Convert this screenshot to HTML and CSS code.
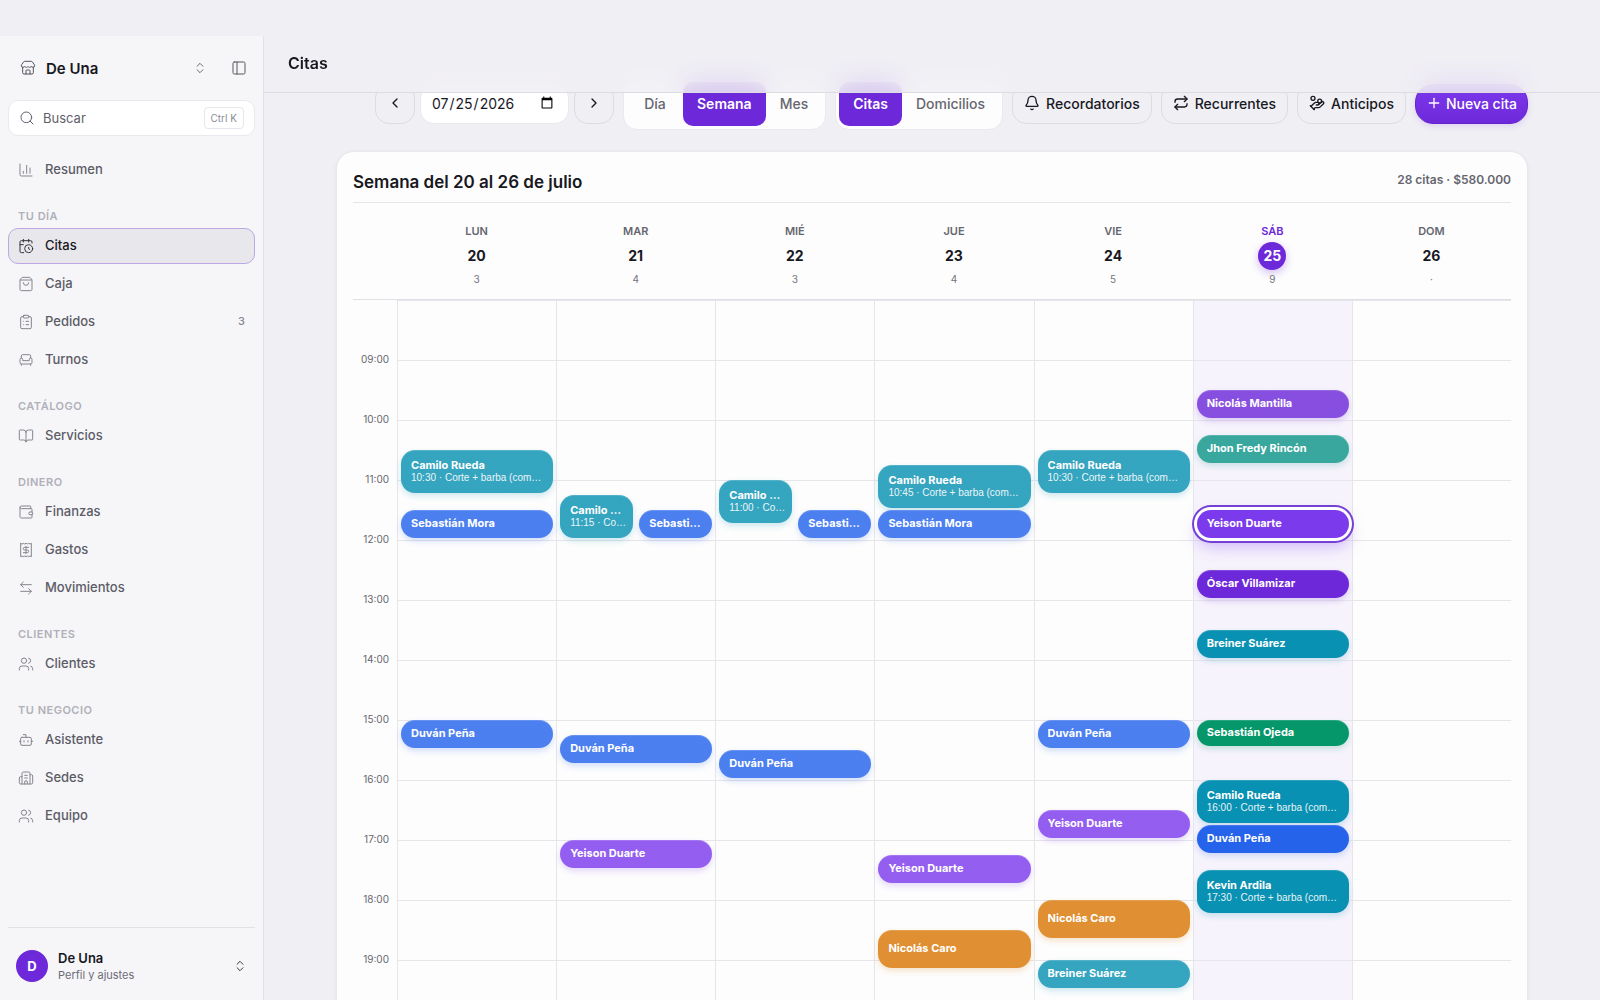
FILE: index.html
```html
<!DOCTYPE html>
<html lang="es">
<head>
    <meta charset="UTF-8">
    <meta name="viewport" content="width=device-width, initial-scale=1.0">
    <title>Citas - De Una</title>
    <link rel="stylesheet" href="styles.css">
</head>
<body>

    <div class="app">
        <aside class="sidebar">
            <div class="brand">
                <button class="brand-switch">
                    <svg class="icon" viewBox="0 0 24 24"><path d="M15 21v-5a1 1 0 0 0-1-1h-4a1 1 0 0 0-1 1v5"/><path d="M17.774 10.31a1.12 1.12 0 0 0-1.549 0 2.5 2.5 0 0 1-3.451 0 1.12 1.12 0 0 0-1.548 0 2.5 2.5 0 0 1-3.452 0 1.12 1.12 0 0 0-1.549 0 2.5 2.5 0 0 1-3.77-3.248l2.889-4.184A2 2 0 0 1 7 2h10a2 2 0 0 1 1.653.873l2.895 4.192a2.5 2.5 0 0 1-3.774 3.244"/><path d="M4 10.95V19a2 2 0 0 0 2 2h12a2 2 0 0 0 2-2v-8.05"/></svg>
                    <span class="brand-name">De Una</span>
                    <svg class="icon icon-small" viewBox="0 0 24 24"><path d="m7 15 5 5 5-5"/><path d="m7 9 5-5 5 5"/></svg>
                </button>
                <button class="icon-button" aria-label="Contraer menú">
                    <svg class="icon" viewBox="0 0 24 24"><rect x="3" y="3" width="18" height="18" rx="2"/><path d="M9 3v18"/></svg>
                </button>
            </div>

            <button class="search">
                <svg class="icon" viewBox="0 0 24 24"><circle cx="11" cy="11" r="8"/><path d="m21 21-4.3-4.3"/></svg>
                <span>Buscar</span>
                <kbd>Ctrl K</kbd>
            </button>

            <nav class="nav">
                <a class="nav-item" href="#">
                    <svg class="icon" viewBox="0 0 24 24"><path d="M3 3v16a2 2 0 0 0 2 2h16"/><path d="M18 17V9"/><path d="M13 17V5"/><path d="M8 17v-3"/></svg>
                    <span>Resumen</span>
                </a>

                <h2 class="nav-title">Tu día</h2>
                <a class="nav-item active" href="#">
                    <svg class="icon" viewBox="0 0 24 24"><path d="M16 14v2.2l1.6 1"/><path d="M16 2v4"/><path d="M21 7.5V6a2 2 0 0 0-2-2H5a2 2 0 0 0-2 2v14a2 2 0 0 0 2 2h3.500"/><path d="M3 10h5"/><path d="M8 2v4"/><circle cx="16" cy="16" r="6"/></svg>
                    <span>Citas</span>
                </a>
                <a class="nav-item" href="#">
                    <svg class="icon" viewBox="0 0 24 24"><path d="M16 10a4 4 0 0 1-8 0"/><path d="M3.103 6.034h17.794"/><path d="M3.400 5.467a2 2 0 0 0-.4 1.200V20a2 2 0 0 0 2 2h14a2 2 0 0 0 2-2V6.667a2 2 0 0 0-.4-1.200l-2-2.667A2 2 0 0 0 17 2H7a2 2 0 0 0-1.600.800z"/></svg>
                    <span>Caja</span>
                </a>
                <a class="nav-item" href="#">
                    <svg class="icon" viewBox="0 0 24 24"><rect x="8" y="2" width="8" height="4" rx="1"/><path d="M16 4h2a2 2 0 0 1 2 2v14a2 2 0 0 1-2 2H6a2 2 0 0 1-2-2V6a2 2 0 0 1 2-2h2"/><path d="M12 11h4"/><path d="M12 16h4"/><path d="M8 11h.01"/><path d="M8 16h.01"/></svg>
                    <span>Pedidos</span>
                    <span class="nav-count">3</span>
                </a>
                <a class="nav-item" href="#">
                    <svg class="icon" viewBox="0 0 24 24"><path d="M19 9V6a2 2 0 0 0-2-2H7a2 2 0 0 0-2 2v3"/><path d="M3 16a2 2 0 0 0 2 2h14a2 2 0 0 0 2-2v-5a2 2 0 0 0-4 0v1.500a.5.5 0 0 1-.5.5h-9a.5.5 0 0 1-.5-.5V11a2 2 0 0 0-4 0z"/><path d="M5 18v2"/><path d="M19 18v2"/></svg>
                    <span>Turnos</span>
                </a>

                <h2 class="nav-title">Catálogo</h2>
                <a class="nav-item" href="#">
                    <svg class="icon" viewBox="0 0 24 24"><path d="M12 7v14"/><path d="M3 18a1 1 0 0 1-1-1V4a1 1 0 0 1 1-1h5a4 4 0 0 1 4 4 4 4 0 0 1 4-4h5a1 1 0 0 1 1 1v13a1 1 0 0 1-1 1h-6a3 3 0 0 0-3 3 3 3 0 0 0-3-3z"/></svg>
                    <span>Servicios</span>
                </a>

                <h2 class="nav-title">Dinero</h2>
                <a class="nav-item" href="#">
                    <svg class="icon" viewBox="0 0 24 24"><path d="M19 7V4a1 1 0 0 0-1-1H5a2 2 0 0 0 0 4h15a1 1 0 0 1 1 1v4h-3a2 2 0 0 0 0 4h3a1 1 0 0 0 1-1v-2a1 1 0 0 0-1-1"/><path d="M3 5v14a2 2 0 0 0 2 2h15a1 1 0 0 0 1-1v-4"/></svg>
                    <span>Finanzas</span>
                </a>
                <a class="nav-item" href="#">
                    <svg class="icon" viewBox="0 0 24 24"><path d="M4 2v20l2-1 2 1 2-1 2 1 2-1 2 1 2-1 2 1V2l-2 1-2-1-2 1-2-1-2 1-2-1-2 1Z"/><path d="M16 8h-6a2 2 0 1 0 0 4h4a2 2 0 1 1 0 4H8"/><path d="M12 17.500v-11"/></svg>
                    <span>Gastos</span>
                </a>
                <a class="nav-item" href="#">
                    <svg class="icon" viewBox="0 0 24 24"><path d="M8 3 4 7l4 4"/><path d="M4 7h16"/><path d="m16 21 4-4-4-4"/><path d="M20 17H4"/></svg>
                    <span>Movimientos</span>
                </a>

                <h2 class="nav-title">Clientes</h2>
                <a class="nav-item" href="#">
                    <svg class="icon" viewBox="0 0 24 24"><path d="M16 21v-2a4 4 0 0 0-4-4H6a4 4 0 0 0-4 4v2"/><circle cx="9" cy="7" r="4"/><path d="M22 21v-2a4 4 0 0 0-3-3.870"/><path d="M16 3.130a4 4 0 0 1 0 7.750"/></svg>
                    <span>Clientes</span>
                </a>

                <h2 class="nav-title">Tu negocio</h2>
                <a class="nav-item" href="#">
                    <svg class="icon" viewBox="0 0 24 24"><path d="M12 8V4H8"/><rect x="4" y="8" width="16" height="12" rx="2"/><path d="M2 14h2"/><path d="M20 14h2"/><path d="M15 13v2"/><path d="M9 13v2"/></svg>
                    <span>Asistente</span>
                </a>
                <a class="nav-item" href="#">
                    <svg class="icon" viewBox="0 0 24 24"><path d="M10 12h4"/><path d="M10 8h4"/><path d="M14 21v-3a2 2 0 0 0-4 0v3"/><path d="M6 10H4a2 2 0 0 0-2 2v7a2 2 0 0 0 2 2h16a2 2 0 0 0 2-2V9a2 2 0 0 0-2-2h-2"/><path d="M6 21V5a2 2 0 0 1 2-2h8a2 2 0 0 1 2 2v16"/></svg>
                    <span>Sedes</span>
                </a>
                <a class="nav-item" href="#">
                    <svg class="icon" viewBox="0 0 24 24"><path d="M16 21v-2a4 4 0 0 0-4-4H6a4 4 0 0 0-4 4v2"/><circle cx="9" cy="7" r="4"/><path d="M22 21v-2a4 4 0 0 0-3-3.870"/><path d="M16 3.130a4 4 0 0 1 0 7.750"/></svg>
                    <span>Equipo</span>
                </a>
            </nav>

            <div class="sidebar-footer">
                <button class="profile">
                    <span class="avatar">D</span>
                    <span class="profile-text">
                        <span class="profile-name">De Una</span>
                        <span class="profile-sub">Perfil y ajustes</span>
                    </span>
                    <svg class="icon icon-small" viewBox="0 0 24 24"><path d="m7 15 5 5 5-5"/><path d="m7 9 5-5 5 5"/></svg>
                </button>
            </div>
        </aside>

        <main class="main">
            <header class="topbar">
                <h1>Citas</h1>
            </header>

            <div class="content">
                <div class="toolbar">
                    <div class="date-nav">
                        <button class="button square" aria-label="Semana anterior">
                            <svg class="icon" viewBox="0 0 24 24"><path d="m15 18-6-6 6-6"/></svg>
                        </button>
                        <input class="date" type="date" value="2026-07-25" aria-label="Fecha">
                        <button class="button square" aria-label="Semana siguiente">
                            <svg class="icon" viewBox="0 0 24 24"><path d="m9 18 6-6-6-6"/></svg>
                        </button>
                    </div>
                    <div class="segmented">
                        <button class="segment">Día</button>
                        <button class="segment active">Semana</button>
                        <button class="segment">Mes</button>
                    </div>
                    <div class="segmented">
                        <button class="segment active">Citas</button>
                        <button class="segment">Domicilios</button>
                    </div>
                    <button class="button">
                        <svg class="icon" viewBox="0 0 24 24"><path d="M10.268 21a2 2 0 0 0 3.464 0"/><path d="M3.262 15.326A1 1 0 0 0 4 17h16a1 1 0 0 0 .740-1.673C19.410 13.956 18 12.499 18 8A6 6 0 0 0 6 8c0 4.499-1.411 5.956-2.738 7.326"/></svg>
                        Recordatorios
                    </button>
                    <button class="button">
                        <svg class="icon" viewBox="0 0 24 24"><path d="m17 2 4 4-4 4"/><path d="M3 11v-1a4 4 0 0 1 4-4h14"/><path d="m7 22-4-4 4-4"/><path d="M21 13v1a4 4 0 0 1-4 4H3"/></svg>
                        Recurrentes
                    </button>
                    <button class="button">
                        <svg class="icon" viewBox="0 0 24 24"><path d="M11 15h2a2 2 0 1 0 0-4h-3c-.6 0-1.100.2-1.400.6L3 17"/><path d="m7 21 1.600-1.400c.3-.4.8-.6 1.400-.6h4c1.100 0 2.100-.4 2.800-1.200l4.600-4.400a2 2 0 0 0-2.750-2.910l-4.200 3.900"/><path d="m2 16 6 6"/><circle cx="16" cy="9" r="2.900"/><circle cx="6" cy="5" r="3"/></svg>
                        Anticipos
                    </button>
                    <button class="button primary">
                        <svg class="icon" viewBox="0 0 24 24"><path d="M5 12h14"/><path d="M12 5v14"/></svg>
                        Nueva cita
                    </button>
                </div>

                <section class="card">
                    <div class="card-header">
                        <h2>Semana del 20 al 26 de julio</h2>
                        <span class="card-total">28 citas · $580.000</span>
                    </div>

                    <div class="week days">
                        <div class="day first"><span class="day-name">Lun</span><span class="day-number">20</span><span class="day-count">3</span></div>
                        <div class="day"><span class="day-name">Mar</span><span class="day-number">21</span><span class="day-count">4</span></div>
                        <div class="day"><span class="day-name">Mié</span><span class="day-number">22</span><span class="day-count">3</span></div>
                        <div class="day"><span class="day-name">Jue</span><span class="day-number">23</span><span class="day-count">4</span></div>
                        <div class="day"><span class="day-name">Vie</span><span class="day-number">24</span><span class="day-count">5</span></div>
                        <div class="day today"><span class="day-name">Sáb</span><span class="day-number">25</span><span class="day-count">9</span></div>
                        <div class="day"><span class="day-name">Dom</span><span class="day-number">26</span><span class="day-count">·</span></div>
                    </div>

                    <!-- one grid row = 5 minutes, row 1 = 08:00 -->
                    <div class="week">
                        <div class="hours">
                            <span>09:00</span>
                            <span>10:00</span>
                            <span>11:00</span>
                            <span>12:00</span>
                            <span>13:00</span>
                            <span>14:00</span>
                            <span>15:00</span>
                            <span>16:00</span>
                            <span>17:00</span>
                            <span>18:00</span>
                            <span>19:00</span>
                        </div>
                        <div class="column">
                            <button class="event teal past" style="grid-row: 31 / span 9"><b>Camilo Rueda</b><small>10:30 · Corte + barba (combo)</small></button>
                            <button class="event blue past" style="grid-row: 43 / span 6"><b>Sebastián Mora</b></button>
                            <button class="event blue past" style="grid-row: 85 / span 6"><b>Duván Peña</b></button>
                        </div>
                        <div class="column">
                            <button class="event teal past left" style="grid-row: 40 / span 9"><b>Camilo Rueda</b><small>11:15 · Corte + barba (combo)</small></button>
                            <button class="event blue past right" style="grid-row: 43 / span 6"><b>Sebastián Mora</b></button>
                            <button class="event blue past" style="grid-row: 88 / span 6"><b>Duván Peña</b></button>
                            <button class="event violet past" style="grid-row: 109 / span 6"><b>Yeison Duarte</b></button>
                        </div>
                        <div class="column">
                            <button class="event teal past left" style="grid-row: 37 / span 9"><b>Camilo Rueda</b><small>11:00 · Corte + barba (combo)</small></button>
                            <button class="event blue past right" style="grid-row: 43 / span 6"><b>Sebastián Mora</b></button>
                            <button class="event blue past" style="grid-row: 91 / span 6"><b>Duván Peña</b></button>
                        </div>
                        <div class="column">
                            <button class="event teal past" style="grid-row: 34 / span 9"><b>Camilo Rueda</b><small>10:45 · Corte + barba (combo)</small></button>
                            <button class="event blue past" style="grid-row: 43 / span 6"><b>Sebastián Mora</b></button>
                            <button class="event violet past" style="grid-row: 112 / span 6"><b>Yeison Duarte</b></button>
                            <button class="event orange past" style="grid-row: 127 / span 8"><b>Nicolás Caro</b></button>
                        </div>
                        <div class="column">
                            <button class="event teal past" style="grid-row: 31 / span 9"><b>Camilo Rueda</b><small>10:30 · Corte + barba (combo)</small></button>
                            <button class="event blue past" style="grid-row: 85 / span 6"><b>Duván Peña</b></button>
                            <button class="event violet past" style="grid-row: 103 / span 6"><b>Yeison Duarte</b></button>
                            <button class="event orange past" style="grid-row: 121 / span 8"><b>Nicolás Caro</b></button>
                            <button class="event teal past" style="grid-row: 133 / span 6"><b>Breiner Suárez</b></button>
                        </div>
                        <div class="column today">
                            <button class="event purple past" style="grid-row: 19 / span 6"><b>Nicolás Mantilla</b></button>
                            <button class="event jade past" style="grid-row: 28 / span 6"><b>Jhon Fredy Rincón</b></button>
                            <button class="event violet current" style="grid-row: 43 / span 6"><b>Yeison Duarte</b></button>
                            <button class="event purple" style="grid-row: 55 / span 6"><b>Óscar Villamizar</b></button>
                            <button class="event teal" style="grid-row: 67 / span 6"><b>Breiner Suárez</b></button>
                            <button class="event green" style="grid-row: 85 / span 5"><b>Sebastián Ojeda</b></button>
                            <button class="event teal" style="grid-row: 97 / span 9"><b>Camilo Rueda</b><small>16:00 · Corte + barba (combo)</small></button>
                            <button class="event blue" style="grid-row: 106 / span 6"><b>Duván Peña</b></button>
                            <button class="event teal" style="grid-row: 115 / span 9"><b>Kevin Ardila</b><small>17:30 · Corte + barba (combo)</small></button>
                        </div>
                        <div class="column"></div>
                    </div>
                </section>
            </div>
        </main>
    </div>

</body>
</html>
```
FILE: styles.css
```css
* {
    box-sizing: border-box;
}
body {
    margin: 0;
    font-family: Inter, "Liberation Sans", sans-serif;
    font-size: 13px;
    color: #18181f;
    background-color: #f0eff4;
}
button,
input {
    font: inherit;
    color: inherit;
}
button {
    cursor: pointer;
}
h1,
h2 {
    margin: 0;
}
.app {
    display: flex;
    height: 100vh;
    padding-top: 36px;
    overflow: hidden;
}
.icon {
    width: 16px;
    height: 16px;
    flex-shrink: 0;
    fill: none;
    stroke: currentColor;
    stroke-width: 1.5;
    stroke-linecap: round;
    stroke-linejoin: round;
}
.icon-small {
    width: 14px;
    height: 14px;
}

/* sidebar */
.sidebar {
    display: flex;
    flex-direction: column;
    width: 264px;
    flex-shrink: 0;
    padding: 12px 8px 0;
    background-color: #f6f6f9;
    border-right: 1px solid #e2e1e7;
}
.brand {
    display: flex;
    align-items: center;
    height: 40px;
    margin-bottom: 12px;
}
.brand-switch {
    display: flex;
    align-items: center;
    flex: 1;
    gap: 10px;
    padding: 0 16px 0 12px;
    border: none;
    background: none;
}
.brand-name {
    flex: 1;
    text-align: left;
    font-size: 15px;
    font-weight: 600;
}
.brand .icon {
    color: #55555f;
}
.icon-button {
    display: flex;
    padding: 8px;
    border: none;
    background: none;
}
.search {
    display: flex;
    align-items: center;
    gap: 8px;
    height: 36px;
    padding: 0 10px;
    border: 1px solid #e9e9ee;
    border-radius: 10px;
    background-color: #fff;
    color: #5f5f6a;
    text-align: left;
}
.search span {
    flex: 1;
}
.search kbd {
    padding: 2px 6px;
    border: 1px solid #e6e6eb;
    border-radius: 4px;
    font-family: inherit;
    font-size: 10px;
    line-height: 16px;
    color: #8b8b95;
}
.nav {
    display: flex;
    flex-direction: column;
    gap: 2px;
    flex: 1;
    padding-top: 16px;
}
.nav-title {
    margin: 18px 0 2px;
    padding: 0 10px;
    font-size: 11px;
    line-height: 16px;
    font-weight: 600;
    letter-spacing: 0.5px;
    text-transform: uppercase;
    color: #b0b0b8;
}
.nav-item {
    display: flex;
    align-items: center;
    gap: 11px;
    height: 36px;
    padding: 0 9px;
    border: 1px solid transparent;
    border-radius: 10px;
    font-weight: 500;
    text-decoration: none;
    color: #5c5c66;
}
.nav-item span {
    padding-bottom: 2px;
}
.nav-item .icon {
    color: #85858d;
}
.nav-item.active {
    background-color: #e8e7ec;
    border-color: #bba8e4;
    color: #18181f;
}
.nav-item.active .icon {
    color: #33333b;
}
.nav-count {
    margin-left: auto;
    font-size: 11px;
    color: #85858d;
}
.sidebar-footer {
    padding: 14px 0 10px;
    border-top: 1px solid #e2e1e7;
}
.profile {
    display: flex;
    align-items: center;
    gap: 10px;
    width: 100%;
    height: 48px;
    padding: 0 8px;
    border: none;
    background: none;
    text-align: left;
}
.avatar {
    display: flex;
    align-items: center;
    justify-content: center;
    width: 32px;
    height: 32px;
    border-radius: 50%;
    background-color: #6d28d9;
    color: #fff;
    font-weight: 700;
}
.profile-text {
    display: flex;
    flex-direction: column;
    flex: 1;
}
.profile-name {
    font-weight: 600;
    line-height: 18px;
}
.profile-sub {
    font-size: 11px;
    line-height: 16px;
    color: #6b6b75;
}

/* main */
.main {
    flex: 1;
    min-width: 0;
}
.topbar {
    position: sticky;
    top: 0;
    z-index: 2;
    display: flex;
    align-items: center;
    height: 57px;
    padding: 0 24px 2px;
    border-bottom: 1px solid #dddce2;
    background-color: rgba(240, 239, 244, 0.8);
    backdrop-filter: blur(12px);
}
.topbar h1 {
    font-size: 16px;
    font-weight: 600;
}
.content {
    max-width: 1240px;
    margin: -15px auto 0;
    padding: 0 24px;
}
.toolbar {
    display: flex;
    align-items: center;
    justify-content: flex-end;
    gap: 9px;
    margin-bottom: 21px;
}
.date-nav {
    display: flex;
    align-items: center;
    gap: 5px;
}
.button {
    display: flex;
    align-items: center;
    gap: 6px;
    height: 40px;
    padding: 0 11px 2px;
    border: 1px solid #dddce2;
    border-radius: 14px;
    background-color: #f0eff4;
    font-size: 14px;
    font-weight: 500;
    white-space: nowrap;
}
.button .icon {
    stroke-width: 2;
}
.button.square {
    width: 40px;
}
.button.primary {
    gap: 4px;
    padding: 0 10px 2px;
    border-color: #6524cc;
    border-radius: 18px;
    background: linear-gradient(#7c3aed, #6d28d9);
    color: #fff;
    box-shadow: 0 2px 6px rgba(109, 40, 217, 0.15);
}
.date {
    width: 149px;
    height: 40px;
    padding: 0 12px 2px 10px;
    border: 1px solid #e9e9ee;
    border-radius: 14px;
    background-color: #fff;
    font-size: 14px;
}
.segmented {
    display: flex;
    height: 52px;
    padding: 3px;
    border: 1px solid #e9e9ee;
    border-radius: 14px;
    background-color: #fdfdfe;
}
.segment {
    min-width: 56px;
    padding: 0 14px 2px;
    border: none;
    border-radius: 10px;
    background: none;
    font-size: 14px;
    font-weight: 500;
    color: #66666f;
}
.segment.active {
    background-color: #6d28d9;
    color: #fff;
    font-weight: 600;
}
.card {
    padding: 16px;
    border: 1px solid #e9e8ee;
    border-radius: 18px;
    background-color: #fdfdfd;
    box-shadow: 0 1px 4px rgba(24, 24, 31, 0.06);
}
.card-header {
    display: flex;
    justify-content: space-between;
    height: 35px;
    border-bottom: 1px solid #e6e5ea;
}
.card-header h2 {
    font-size: 17px;
    line-height: 28px;
    font-weight: 600;
}
.card-total {
    font-size: 12px;
    font-weight: 600;
    line-height: 24px;
    color: #66666f;
}

/* week */
.week {
    display: grid;
    grid-template-columns: 44px repeat(7, 1fr);
}
.days {
    padding: 20px 0 12px;
    border-bottom: 1px solid #e0dfe5;
}
.day {
    display: flex;
    flex-direction: column;
    align-items: center;
}
.day.first {
    grid-column: 2;
}
.day-name {
    font-size: 11px;
    line-height: 16px;
    font-weight: 600;
    text-transform: uppercase;
    color: #66666f;
}
.day-number {
    width: 28px;
    height: 28px;
    margin: 3px 0 1px;
    border-radius: 50%;
    font-size: 14px;
    line-height: 28px;
    font-weight: 700;
    text-align: center;
}
.day-count {
    font-size: 10px;
    line-height: 16px;
    color: #74747e;
}
.day.today .day-name {
    color: #6d28d9;
}
.day.today .day-number {
    background-color: #6d28d9;
    color: #fff;
    box-shadow: 0 3px 8px rgba(109, 40, 217, 0.3);
}
.hours {
    display: flex;
    flex-direction: column;
    padding-top: 52px;
    padding-right: 8px;
}
.hours span {
    height: 60px;
    font-size: 10px;
    line-height: 14px;
    text-align: right;
    color: #66666f;
}
.column {
    display: grid;
    grid-template-columns: 1fr 1fr;
    grid-template-rows: repeat(156, 5px);
    border-left: 1px solid #e6e5ea;
    background-image: linear-gradient(#e6e5ea 1px, transparent 1px);
    background-size: 100% 60px;
}
.column.today {
    background-color: #f6f3fc;
}
.event {
    grid-column: 1 / 3;
    display: flex;
    flex-direction: column;
    justify-content: center;
    min-width: 0;
    min-height: 26px;
    margin: 0 3px 2px;
    padding: 0 9px 1px 10px;
    border: none;
    border-radius: 14px;
    color: #fff;
    text-align: left;
}
.event b,
.event small {
    overflow: hidden;
    text-overflow: ellipsis;
    white-space: nowrap;
}
.event b {
    font-size: 11px;
    line-height: 13px;
    font-weight: 700;
}
.event small {
    font-family: "Liberation Sans", Arial, sans-serif;
    font-size: 10px;
    line-height: 12px;
    opacity: 0.9;
}
.event.left {
    grid-column: 1;
    padding-right: 6px;
}
.event.right {
    grid-column: 2;
}
.event.past {
    background-image: linear-gradient(rgba(255, 255, 255, 0.18), rgba(255, 255, 255, 0.18));
}
.teal {
    background-color: #0891b2;
    box-shadow: 0 3px 6px rgba(8, 145, 178, 0.2), inset 0 1px 0 rgba(255, 255, 255, 0.15);
}
.blue {
    background-color: #2563eb;
    box-shadow: 0 3px 6px rgba(37, 99, 235, 0.2), inset 0 1px 0 rgba(255, 255, 255, 0.15);
}
.violet {
    background-color: #7c3aed;
    box-shadow: 0 3px 6px rgba(124, 58, 237, 0.2), inset 0 1px 0 rgba(255, 255, 255, 0.15);
}
.purple {
    background-color: #6d28d9;
    box-shadow: 0 3px 6px rgba(109, 40, 217, 0.2), inset 0 1px 0 rgba(255, 255, 255, 0.15);
}
.jade {
    background-color: #0d9488;
    box-shadow: 0 3px 6px rgba(13, 148, 136, 0.2), inset 0 1px 0 rgba(255, 255, 255, 0.15);
}
.green {
    background-color: #059669;
    box-shadow: 0 3px 6px rgba(5, 150, 105, 0.2), inset 0 1px 0 rgba(255, 255, 255, 0.15);
}
.orange {
    background-color: #d97706;
    box-shadow: 0 3px 6px rgba(217, 119, 6, 0.2), inset 0 1px 0 rgba(255, 255, 255, 0.15);
}
.current {
    z-index: 1;
    box-shadow: 0 0 0 3px #fff, 0 0 0 5px #7440d6, 0 8px 16px rgba(124, 58, 237, 0.35);
}
```
